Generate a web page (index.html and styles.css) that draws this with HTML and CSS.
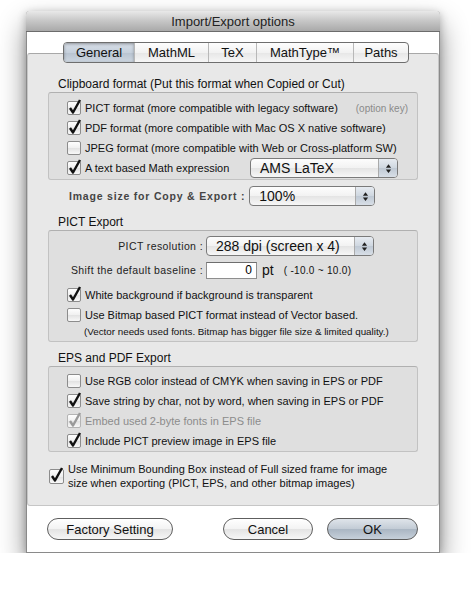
FILE: index.html
```html
<!DOCTYPE html>
<html lang="en">
<head>
    <meta charset="UTF-8">
    <title>Import/Export options</title>
    <link rel="stylesheet" href="styles.css">
</head>
<body>
    <div class="window">
        <div class="titlebar">Import/Export options</div>

        <div class="panel">
            <div class="tabs">
                <span class="tab selected">General</span>
                <span class="tab">MathML</span>
                <span class="tab">TeX</span>
                <span class="tab">MathType™</span>
                <span class="tab">Paths</span>
            </div>

            <div class="group-label first">Clipboard format (Put this format when Copied or Cut)</div>
            <div class="group clip">
                <div class="row">
                    <span class="cb on"><svg viewBox="0 0 14 14"><path d="M3 7 L6 11.5 L13 -1"/></svg></span>
                    <span>PICT format (more compatible with legacy software)</span>
                    <span class="hint">(option key)</span>
                </div>
                <div class="row">
                    <span class="cb on"><svg viewBox="0 0 14 14"><path d="M3 7 L6 11.5 L13 -1"/></svg></span>
                    <span>PDF format (more compatible with Mac OS X native software)</span>
                </div>
                <div class="row">
                    <span class="cb"></span>
                    <span>JPEG format (more compatible with Web or Cross-platform SW)</span>
                </div>
                <div class="row">
                    <span class="cb on"><svg viewBox="0 0 14 14"><path d="M3 7 L6 11.5 L13 -1"/></svg></span>
                    <span class="math-label">A text based Math expression</span>
                    <div class="popup latex">
                        <span class="popup-text">AMS LaTeX</span>
                        <span class="popup-arrows"><svg viewBox="0 0 8 12"><path d="M4 1 L7 5 L1 5 Z M1 7 L7 7 L4 11 Z"/></svg></span>
                    </div>
                </div>
            </div>

            <div class="size-row">
                <span class="field-label bold">Image size for Copy &amp; Export :</span>
                <div class="popup size">
                    <span class="popup-text">100%</span>
                    <span class="popup-arrows"><svg viewBox="0 0 8 12"><path d="M4 1 L7 5 L1 5 Z M1 7 L7 7 L4 11 Z"/></svg></span>
                </div>
            </div>

            <div class="group-label">PICT Export</div>
            <div class="group pict">
                <div class="form-row">
                    <span class="field-label right">PICT resolution :</span>
                    <div class="popup res">
                        <span class="popup-text">288 dpi (screen x 4)</span>
                        <span class="popup-arrows"><svg viewBox="0 0 8 12"><path d="M4 1 L7 5 L1 5 Z M1 7 L7 7 L4 11 Z"/></svg></span>
                    </div>
                </div>
                <div class="form-row shift">
                    <span class="field-label right">Shift the default baseline :</span>
                    <input type="text" class="num" value="0">
                    <span class="unit">pt</span>
                    <span class="range">( -10.0 ~ 10.0)</span>
                </div>
                <div class="row">
                    <span class="cb on"><svg viewBox="0 0 14 14"><path d="M3 7 L6 11.5 L13 -1"/></svg></span>
                    <span>White background if background is transparent</span>
                </div>
                <div class="row">
                    <span class="cb"></span>
                    <span>Use Bitmap based PICT format instead of Vector based.</span>
                </div>
                <div class="note">(Vector needs used fonts. Bitmap has bigger file size &amp; limited quality.)</div>
            </div>

            <div class="group-label eps-label">EPS and PDF Export</div>
            <div class="group eps">
                <div class="row">
                    <span class="cb"></span>
                    <span>Use RGB color instead of CMYK when saving in EPS or PDF</span>
                </div>
                <div class="row">
                    <span class="cb on"><svg viewBox="0 0 14 14"><path d="M3 7 L6 11.5 L13 -1"/></svg></span>
                    <span>Save string by char, not by word, when saving in EPS or PDF</span>
                </div>
                <div class="row disabled">
                    <span class="cb on"><svg viewBox="0 0 14 14"><path d="M3 7 L6 11.5 L13 -1"/></svg></span>
                    <span>Embed used 2-byte fonts in EPS file</span>
                </div>
                <div class="row">
                    <span class="cb on"><svg viewBox="0 0 14 14"><path d="M3 7 L6 11.5 L13 -1"/></svg></span>
                    <span>Include PICT preview image in EPS file</span>
                </div>
            </div>

            <div class="bbox-row">
                <span class="cb on"><svg viewBox="0 0 14 14"><path d="M3 7 L6 11.5 L13 -1"/></svg></span>
                <span>Use Minimum Bounding Box instead of Full sized frame for image<br>size when exporting (PICT, EPS, and other bitmap images)</span>
            </div>
        </div>

        <div class="footer">
            <button class="btn factory">Factory Setting</button>
            <button class="btn cancel">Cancel</button>
            <button class="btn ok">OK</button>
        </div>
    </div>
</body>
</html>
```

FILE: styles.css
```css
body {
    margin: 0;
    padding: 11px 0 0 26px;
    background: #fff;
    font-family: "Liberation Sans", Arial, sans-serif;
    color: #111;
}
.window {
    width: 414px;
    height: 542px;
    box-sizing: border-box;
    background: #fff;
    border: 1px solid #8a8a8a;
    border-top: none;
    border-radius: 4px 4px 0 0;
    box-shadow: 0 14px 28px rgba(0, 0, 0, 0.45), 0 2px 8px rgba(0, 0, 0, 0.25);
    display: flex;
    flex-direction: column;
    white-space: nowrap;
}
.titlebar {
    height: 20px;
    line-height: 21px;
    text-align: center;
    font-size: 13px;
    color: #222;
    background: linear-gradient(#e9e9e9, #c6c6c6 50%, #a9a9a9);
    border-bottom: 1px solid #6c6c6c;
    border-radius: 4px 4px 0 0;
    margin: 0 -1px;
}
.panel {
    margin: 21px 0 0 0;
    height: 453px;
    box-sizing: border-box;
    background: #e8e8e8;
    border: 1px solid #c6c6c6;
    border-top-color: #a8a8a8;
    border-radius: 3px;
    display: flex;
    flex-direction: column;
}
.tabs {
    display: flex;
    margin: -12px 0 0 35px;
    width: 346px;
    height: 21px;
    box-sizing: border-box;
    border: 1px solid #6e6e6e;
    border-radius: 4px;
    background: linear-gradient(#fdfdfd, #f2f2f2 50%, #e6e6e6 51%, #f6f6f6);
    overflow: hidden;
}
.tab {
    font-size: 13px;
    line-height: 19px;
    text-align: center;
    border-left: 1px solid #b8b8b8;
    color: #111;
}
.tab:nth-child(1) { width: 70px; border-left: none; }
.tab:nth-child(2) { width: 73px; }
.tab:nth-child(3) { width: 47px; }
.tab:nth-child(4) { width: 96px; }
.tab:nth-child(5) { flex: 1; }
.tab.selected {
    background: linear-gradient(#d8dfe8, #c6d0dc 50%, #b8c3d0 51%, #cdd6e0);
    box-shadow: inset 0 1px 3px rgba(0, 0, 0, 0.35);
}
.group-label {
    font-size: 12px;
    line-height: 14px;
    margin: 0 0 1px 30px;
}
.group-label.first {
    margin-top: 14px;
}
.group {
    margin: 0 20px 0 20px;
    background: #dfdfdf;
    border: 1px solid #c2c2c2;
    border-top-color: #b0b0b0;
    border-radius: 3px;
}
.clip {
    height: 88px;
    box-sizing: border-box;
    padding: 5px 0 0 18px;
}
.row {
    display: flex;
    align-items: center;
    height: 20px;
    font-size: 11px;
}
.cb {
    width: 12px;
    height: 12px;
    flex: none;
    margin-right: 4px;
    border: 1px solid #8c8c8c;
    border-radius: 2px;
    background: linear-gradient(#fefefe, #f0f0f0 50%, #e2e2e2 51%, #f8f8f8);
    position: relative;
}
.cb svg {
    position: absolute;
    left: -1px;
    top: -1px;
    width: 14px;
    height: 14px;
    overflow: visible;
}
.cb svg path {
    fill: none;
    stroke: #111;
    stroke-width: 2.4;
    stroke-linejoin: round;
}
.hint {
    margin-left: auto;
    margin-right: 9px;
    font-size: 10px;
    color: #8a8a8a;
}
.math-label {
    width: 165px;
}
.popup {
    display: flex;
    align-items: stretch;
    height: 20px;
    box-sizing: border-box;
    border: 1px solid #7a7a7a;
    border-radius: 4px;
    background: linear-gradient(#fdfdfd, #f2f2f2 50%, #e4e4e4 51%, #f7f7f7);
    overflow: hidden;
}
.popup-text {
    flex: 1;
    font-size: 14px;
    line-height: 18px;
    padding-left: 9px;
}
.popup-arrows {
    width: 18px;
    border-left: 1px solid #aaa;
    display: flex;
    align-items: center;
    justify-content: center;
    background: linear-gradient(#e6ebf1, #cfd7e0 50%, #bfc9d4 51%, #d8dfe7);
}
.popup-arrows svg {
    width: 7px;
    height: 11px;
}
.popup-arrows path {
    fill: #222;
}
.latex {
    width: 148px;
}
.size-row {
    display: flex;
    align-items: center;
    margin: 6px 0 9px 41px;
}
.field-label {
    font-size: 10.5px;
    letter-spacing: 0.4px;
    color: #222;
}
.field-label.bold {
    font-weight: bold;
    letter-spacing: 0.8px;
    color: #444;
}
.size {
    width: 126px;
    margin-left: 4px;
}
.pict {
    height: 112px;
    box-sizing: border-box;
    padding: 5px 0 0 18px;
}
.form-row {
    display: flex;
    align-items: center;
    height: 20px;
}
.form-row .field-label.right {
    width: 136px;
    text-align: right;
    margin-right: 3px;
}
.res {
    width: 168px;
}
.shift {
    margin-top: 5px;
    margin-bottom: 6px;
    height: 18px;
}
.num {
    width: 51px;
    height: 17px;
    box-sizing: border-box;
    border: 1px solid #8e8e8e;
    border-top-color: #6e6e6e;
    font-family: inherit;
    font-size: 12px;
    text-align: right;
    padding: 0 4px;
    background: #fff;
}
.unit {
    font-size: 14px;
    margin-left: 5px;
}
.range {
    font-size: 10px;
    letter-spacing: 0.3px;
    margin-left: 10px;
}
.note {
    font-size: 9.8px;
    line-height: 14px;
    margin-left: 17px;
}
.eps-label {
    margin-top: 9px;
}
.eps {
    height: 86px;
    box-sizing: border-box;
    padding: 4px 0 0 18px;
}
.disabled {
    color: #8c8c8c;
}
.disabled .cb {
    border-color: #b4b4b4;
}
.disabled .cb svg path {
    stroke: #9a9a9a;
}
.bbox-row {
    display: flex;
    align-items: center;
    margin: 10px 0 0 21px;
    font-size: 11px;
    line-height: 14px;
}
.bbox-row .cb {
    width: 13px;
    height: 13px;
}
.footer {
    flex: 1;
    display: flex;
    align-items: center;
    padding: 0 0 0 20px;
}
.btn {
    height: 22px;
    box-sizing: border-box;
    border: 1px solid #5e5e5e;
    border-radius: 11px;
    font-family: inherit;
    font-size: 13px;
    color: #111;
    background: linear-gradient(#ffffff, #f3f3f3 50%, #e3e3e3 51%, #f6f6f6);
    padding: 0;
}
.factory {
    width: 126px;
}
.cancel {
    width: 90px;
    margin-left: 50px;
}
.ok {
    width: 91px;
    margin-left: 14px;
    background: linear-gradient(#dfe4ea, #c2cbd5 50%, #aab6c3 51%, #c6d0da);
}
```
